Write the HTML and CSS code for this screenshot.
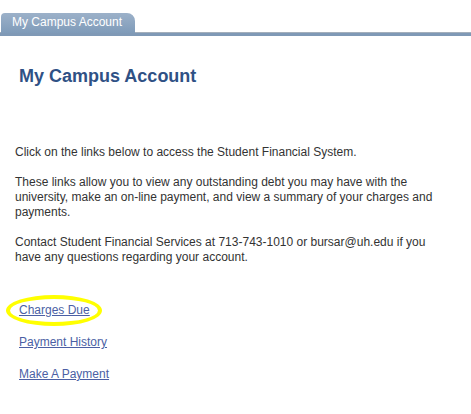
FILE: index.html
```html
<!DOCTYPE html>
<html>
<head>
<meta charset="utf-8">
<link rel="stylesheet" href="styles.css">
</head>
<body>
<div class="tabbar">
  <div class="tab">My Campus Account</div>
</div>
<h1 class="title">My Campus Account</h1>
<div class="content">
  <p>Click on the links below to access the Student Financial System.</p>
  <p>These links allow you to view any outstanding debt you may have with the university, make an on-line payment, and view a summary of your charges and payments.</p>
  <p>Contact Student Financial Services at 713-743-1010 or bursar@uh.edu if you have any questions regarding your account.</p>
</div>
<ul class="links">
  <li class="highlighted"><a href="#">Charges Due</a></li>
  <li><a href="#">Payment History</a></li>
  <li><a href="#">Make A Payment</a></li>
</ul>
</body>
</html>
```
FILE: styles.css
```css
html, body {
  margin: 0;
  padding: 0;
  background: #fff;
  font-family: "Liberation Sans", Arial, sans-serif;
}
.tabbar {
  padding-top: 13px;
  padding-left: 1px;
  border-bottom: 3px solid #7f99b6;
  box-shadow: 0 -1px 0 #a4afbb inset;
  display: flex;
}
.tab {
  width: 123px;
  height: 20px;
  padding-left: 11px;
  background: linear-gradient(#9cb1c9, #7f9bb9);
  border-radius: 4px 8px 0 0;
  color: #fff;
  font-size: 12px;
  line-height: 18px;
}
.title {
  margin: 29px 0 0 19px;
  font-size: 18px;
  font-weight: bold;
  color: #2f5185;
  line-height: 22px;
}
.content {
  margin: 58px 0 0 15px;
  width: 436px;
  font-size: 12px;
  line-height: 15px;
  color: #333;
}
.content p {
  margin: 0 0 15px 0;
}
.links {
  list-style: none;
  margin: 38px 0 0 19px;
  padding: 0;
  font-size: 12px;
  line-height: 15px;
}
.links li {
  margin-bottom: 17px;
}
.links a {
  color: #4b5fa4;
  text-decoration: underline;
}
.highlighted {
  position: relative;
}
.highlighted::before {
  content: "";
  position: absolute;
  left: -13px;
  top: -8px;
  width: 88px;
  height: 23px;
  border: 4px solid #ffff00;
  border-radius: 50%;
}
```
